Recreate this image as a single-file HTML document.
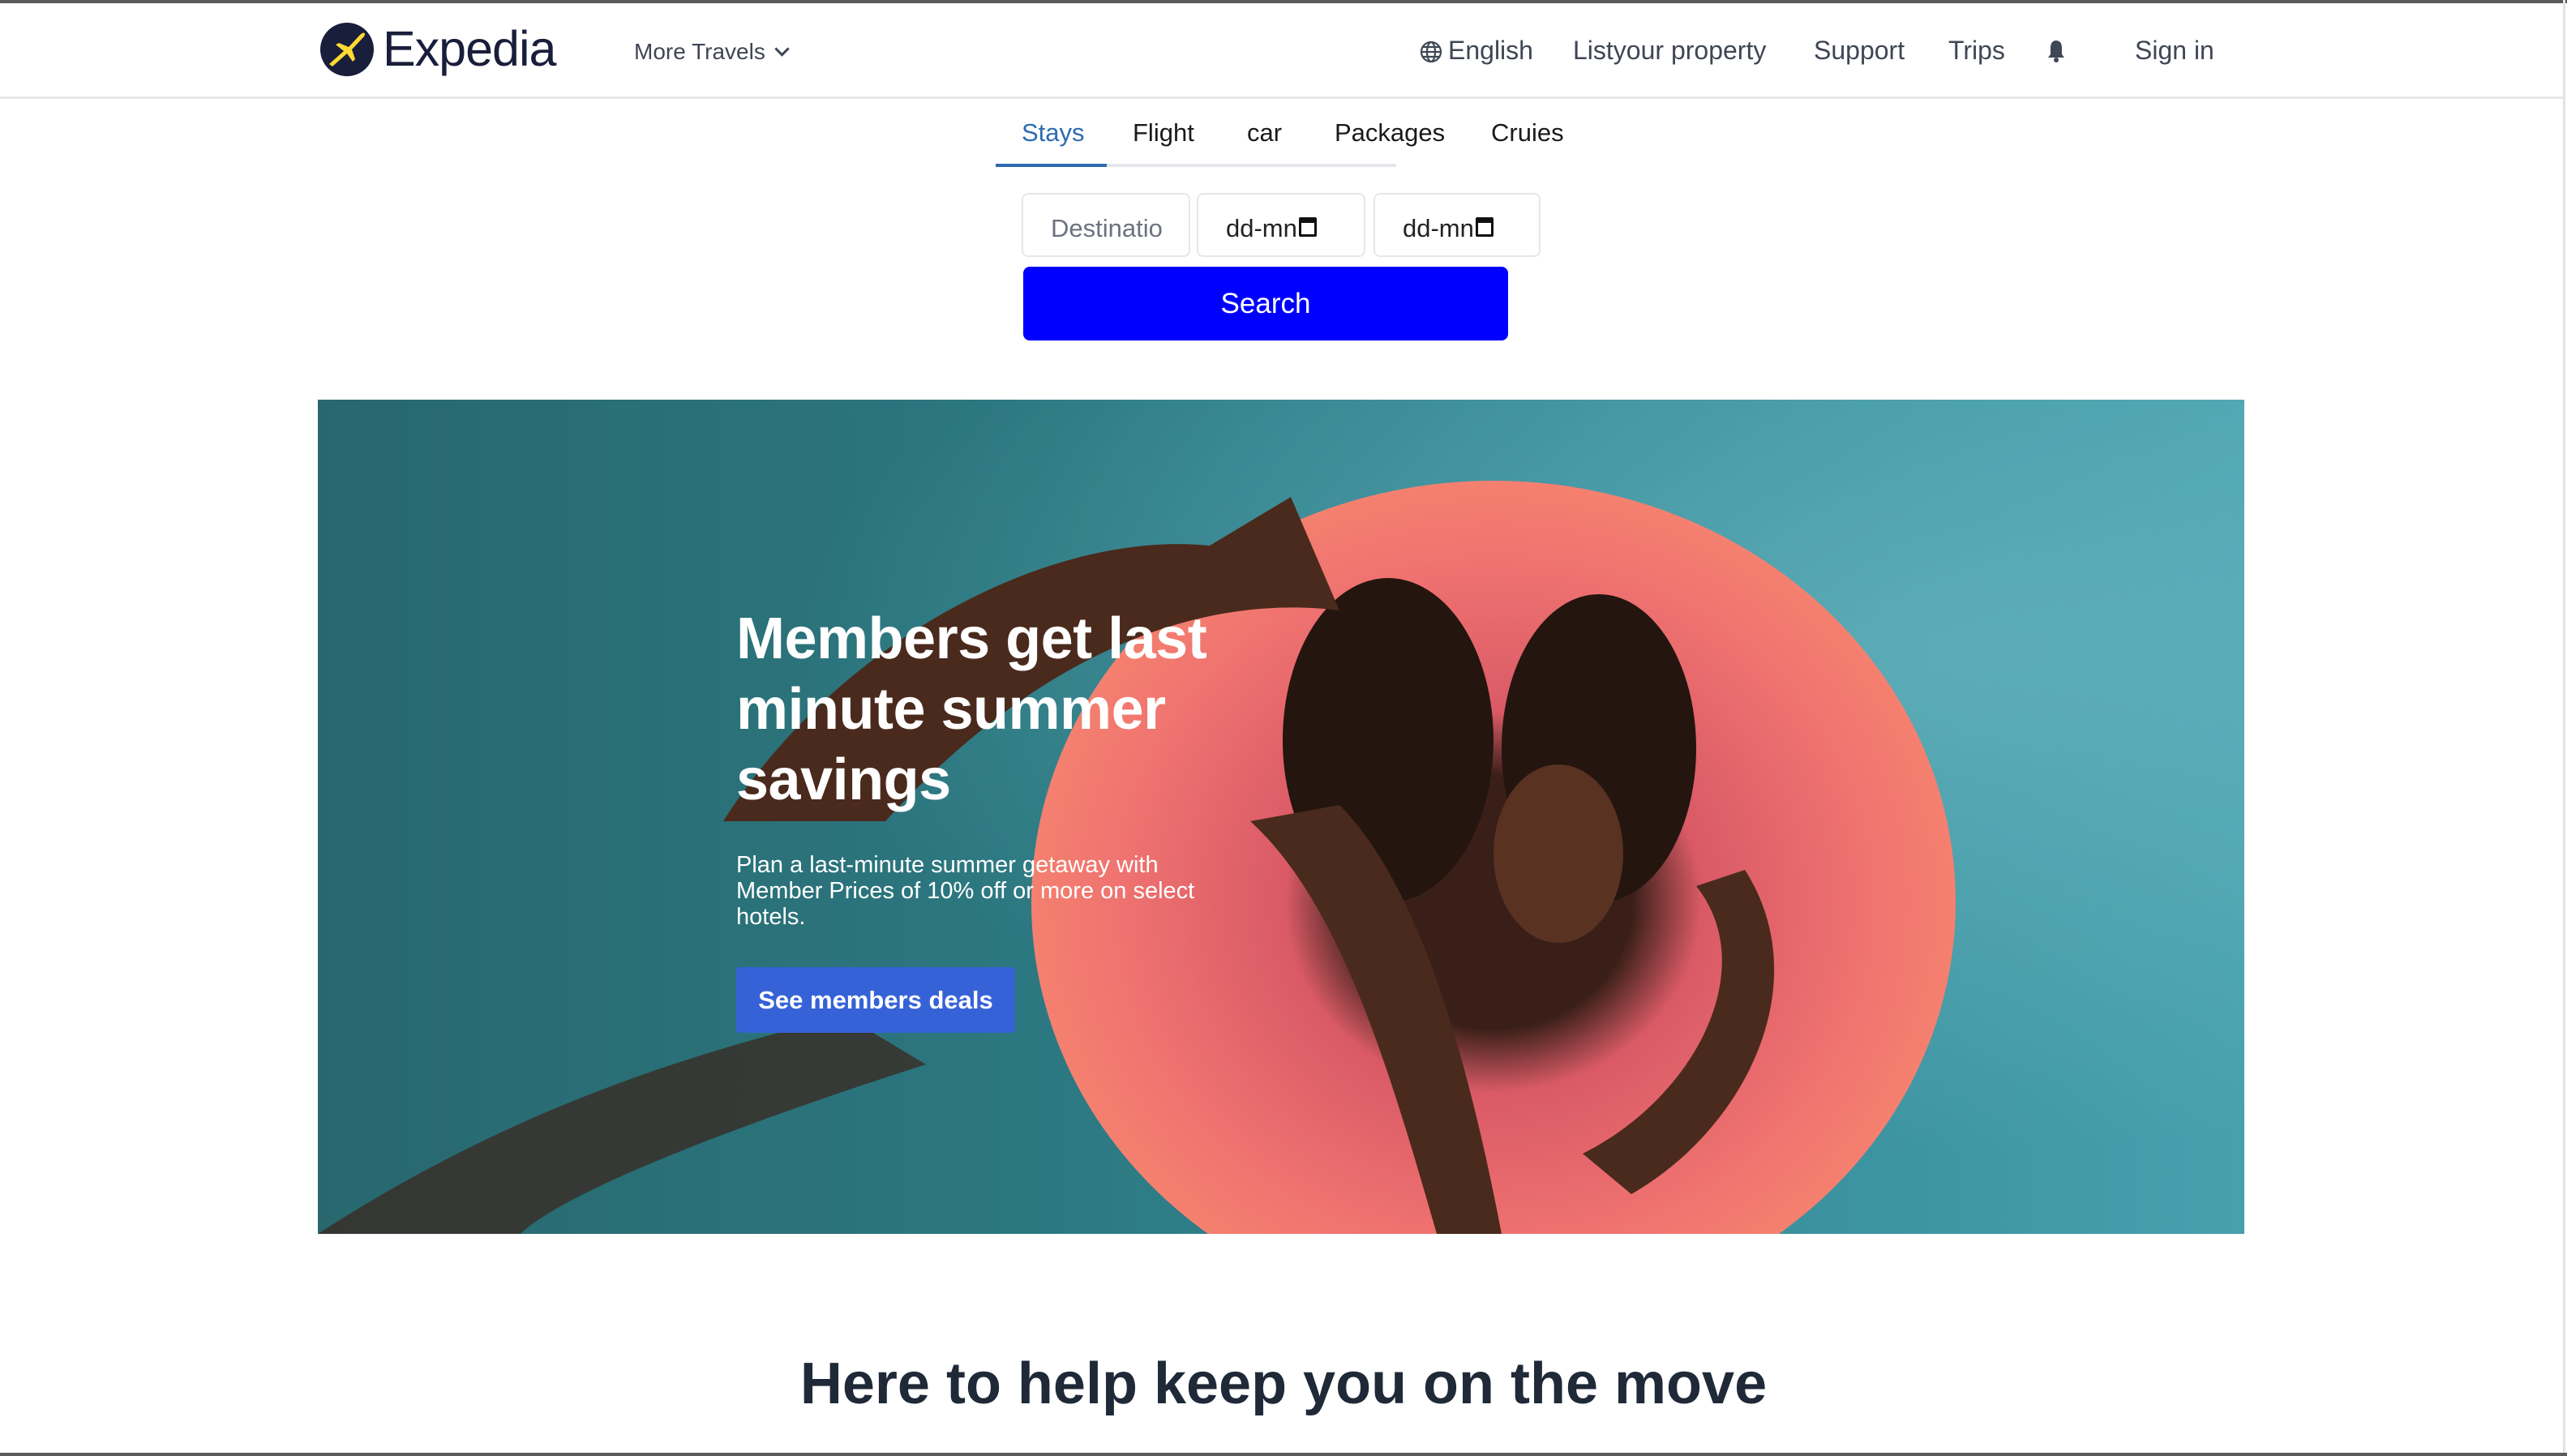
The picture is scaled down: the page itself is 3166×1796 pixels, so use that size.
<!DOCTYPE html>
<html><head><meta charset="utf-8">
<style>
*{margin:0;padding:0;box-sizing:border-box}
html,body{width:3166px;height:1796px;overflow:hidden;background:#fff;font-family:"Liberation Sans",sans-serif}
.topb{position:absolute;left:0;top:0;width:3166px;height:4px;background:#5a5a5e}
.rb{position:absolute;right:2px;top:0;width:3px;height:1796px;background:#e3e3e3}
.hdr{position:absolute;left:0;top:119px;width:3163px;height:3px;background:#e5e7eb}
.t{position:absolute;white-space:nowrap}
.nav{font-size:32px;color:#3f4654;top:44px}
.tab{font-size:31px;color:#1a1a1a;top:146px}
.inp{position:absolute;top:238px;height:79px;border:2px solid #e5e7eb;border-radius:8px;font-size:31px;color:#222;padding:24px 0 0 34px}
</style></head><body>
<div class="topb"></div><div class="rb"></div><div class="hdr"></div>
<svg style="position:absolute;left:394px;top:27px" width="68" height="68" viewBox="0 0 68 68">
<circle cx="34" cy="34" r="33" fill="#191e3b"/>
<path d="M12 52 L30 36 L20 28 L24 26 L36 31 L50 16 C54 12 58 13 55 18 L40 34 L44 46 L41 49 L34 39 L16 55 Z" fill="#fddb32"/>
</svg>
<div class="t" style="left:472px;top:25px;font-size:61px;color:#191e3b;letter-spacing:-1px">Expedia</div>
<div class="t" style="left:782px;top:48px;font-size:28px;color:#3f4654">More Travels <span style="display:inline-block;width:13px;height:13px;border-right:3px solid #3f4654;border-bottom:3px solid #3f4654;transform:rotate(45deg);margin:0 0 6px 6px"></span></div>
<svg style="position:absolute;left:1750px;top:49px" width="30" height="30" viewBox="0 0 30 30" fill="none" stroke="#3f4654" stroke-width="2.2"><circle cx="15" cy="15" r="12"/><ellipse cx="15" cy="15" rx="5" ry="12"/><path d="M3 15h24M5 9h20M5 21h20"/></svg>
<div class="t nav" style="left:1786px">English</div>
<div class="t nav" style="left:1940px">Listyour property</div>
<div class="t nav" style="left:2237px">Support</div>
<div class="t nav" style="left:2403px">Trips</div>
<svg style="position:absolute;left:2524px;top:48px" width="24" height="30" viewBox="0 0 24 30"><path d="M12 2c-5 0-7 4-7 9v8l-3 4h20l-3-4v-8c0-5-2-9-7-9z" fill="#3f4654"/><circle cx="12" cy="26" r="3" fill="#3f4654"/></svg>
<div class="t nav" style="left:2633px">Sign in</div>

<div class="t tab" style="left:1260px;color:#2d6bb0">Stays</div>
<div class="t tab" style="left:1397px">Flight</div>
<div class="t tab" style="left:1538px">car</div>
<div class="t tab" style="left:1646px">Packages</div>
<div class="t tab" style="left:1839px">Cruies</div>
<div style="position:absolute;left:1228px;top:202px;width:494px;height:4px;background:#e5e7eb"></div>
<div style="position:absolute;left:1228px;top:202px;width:137px;height:4px;background:#2d6bb0"></div>

<div class="inp" style="left:1260px;width:208px;color:#6b7280">Destinatio</div>
<div class="inp" style="left:1476px;width:208px;padding-left:34px">dd-mn<span style="display:inline-block;width:22px;height:24px;border:3px solid #111;border-top-width:7px;border-radius:2px;margin-left:2px"></span></div>
<div class="inp" style="left:1694px;width:206px;padding-left:34px">dd-mn<span style="display:inline-block;width:22px;height:24px;border:3px solid #111;border-top-width:7px;border-radius:2px;margin-left:2px"></span></div>
<div style="position:absolute;left:1262px;top:329px;width:598px;height:91px;background:#0000ff;border-radius:8px;color:#fff;font-size:35px;text-align:center;line-height:91px">Search</div>

<div style="position:absolute;left:392px;top:493px;width:2376px;height:1029px;overflow:hidden;background:linear-gradient(90deg,#2b6d74 0%,#2f7f88 35%,#3a95a3 65%,#4fb0be 100%)">
<svg width="2376" height="1029" viewBox="0 0 2376 1029">
<defs>
<radialGradient id="rg" cx="0.5" cy="0.5" r="0.5"><stop offset="0.3" stop-color="#3a1f18"/><stop offset="0.45" stop-color="#d95a66"/><stop offset="0.8" stop-color="#ef7270"/><stop offset="1" stop-color="#f4806f"/></radialGradient>
<radialGradient id="w" cx="0.85" cy="0.3" r="0.6"><stop offset="0" stop-color="#7fd0da" stop-opacity="0.6"/><stop offset="1" stop-color="#7fd0da" stop-opacity="0"/></radialGradient>
</defs>
<rect width="2376" height="1029" fill="url(#w)"/>
<rect width="2376" height="1029" fill="#1c4a52" opacity="0.15"/>
<ellipse cx="1450" cy="620" rx="570" ry="520" fill="url(#rg)"/>
<ellipse cx="1320" cy="420" rx="130" ry="200" fill="#24150f"/>
<ellipse cx="1580" cy="430" rx="120" ry="190" fill="#24150f"/>
<ellipse cx="1530" cy="560" rx="80" ry="110" fill="#5a3222"/>
<path d="M500 520 C640 300 900 160 1100 180 L1200 120 L1260 260 C1100 240 900 300 700 520 Z" fill="#4a2a1c"/>
<path d="M1150 520 C1260 620 1320 820 1380 1029 L1460 1029 C1420 820 1360 600 1260 500 Z" fill="#4a2a1c"/>
<path d="M1700 600 C1780 700 1700 860 1560 930 L1620 980 C1760 900 1850 720 1760 580 Z" fill="#4a2a1c"/>
<path d="M0 1029 C200 900 400 820 650 760 L750 820 C500 900 300 980 250 1029 Z" fill="#3a2218" opacity="0.7"/>
</svg>
<div class="t" style="left:516px;top:252px;font-size:72px;font-weight:bold;color:#fff;line-height:87px;white-space:normal;width:640px;letter-spacing:-0.5px">Members get last minute summer savings</div>
<div class="t" style="left:516px;top:558px;font-size:29px;color:#fff;line-height:32px;white-space:normal;width:625px">Plan a last-minute summer getaway with Member Prices of 10% off or more on select hotels.</div>
<div style="position:absolute;left:516px;top:700px;width:344px;height:81px;background:#3662d8;border-radius:4px;color:#fff;font-size:31px;font-weight:bold;text-align:center;line-height:81px">See members deals</div>
</div>

<div class="t" style="left:0;width:3166px;text-align:center;top:1666px;font-size:72px;font-weight:bold;color:#1f2937">Here to help keep you on the move</div>
<div style="position:absolute;left:0;top:1792px;width:3166px;height:4px;background:#5a5a5e"></div>
</body></html>
